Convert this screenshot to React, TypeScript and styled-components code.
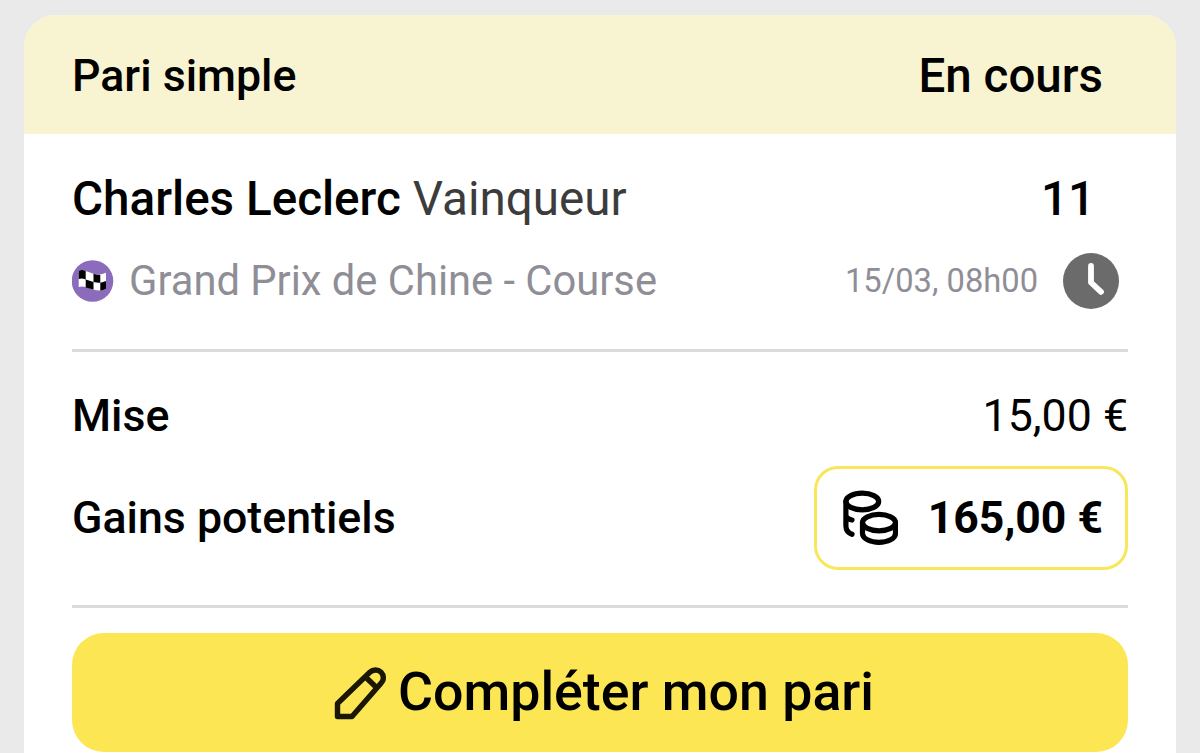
import React from "react";
import styled, { createGlobalStyle } from "styled-components";

const GlobalStyle = createGlobalStyle`
  body {
    margin: 0;
    background: #eaeaeb;
    font-family: Roboto, "Liberation Sans", sans-serif;
    color: #000;
  }
`;

const Page = styled.div`
  box-sizing: border-box;
  width: 1200px;
  height: 753px;
  padding: 15px 24px 0;
  overflow: hidden;
`;

const Card = styled.section`
  height: 780px;
  border-radius: 32px;
  background: #fff;
  overflow: hidden;
`;

const Header = styled.header`
  box-sizing: border-box;
  display: flex;
  align-items: center;
  justify-content: space-between;
  height: 119px;
  padding: 2px 73px 0 48px;
  background: #f8f3d0;
`;

const Body = styled.div`
  padding: 32px 48px 0;
`;

const Row = styled.div<{ height: number; end?: number }>`
  box-sizing: border-box;
  display: flex;
  align-items: center;
  justify-content: space-between;
  height: ${(props) => props.height}px;
  padding-right: ${(props) => props.end || 0}px;
`;

const Group = styled.div<{ gap: number }>`
  display: flex;
  align-items: center;
  gap: ${(props) => props.gap}px;
`;

const Text = styled.span<{
  size: number;
  weight?: number;
  color?: string;
}>`
  padding-top: 2px;
  font-size: ${(props) => props.size}px;
  font-weight: ${(props) => props.weight || 400};
  color: ${(props) => props.color || "#000"};
  line-height: 1.2;
  white-space: nowrap;
`;

const ButtonLabel = styled(Text)`
  padding-top: 0;
`;

const Divider = styled.hr`
  height: 3px;
  margin: 0;
  border: none;
  background: #dadbdc;
`;

const Summary = styled.div`
  padding: 29px 0 21px;
`;

const GainBox = styled.div`
  box-sizing: border-box;
  display: flex;
  align-items: center;
  justify-content: space-between;
  width: 314px;
  height: 104px;
  padding: 0 22px 0 25px;
  border: 3px solid #f8e75c;
  border-radius: 24px;
`;

const Button = styled.button`
  display: flex;
  align-items: center;
  justify-content: center;
  gap: 11px;
  width: 100%;
  height: 119px;
  margin-top: 25px;
  padding: 0 0 0 7px;
  border: none;
  border-radius: 32px;
  background: #fce653;
  font-family: inherit;
  cursor: pointer;
`;

const Icon = styled.svg`
  display: block;
  flex: none;
`;

function RaceIcon() {
  return (
    <Icon width="42" height="42" viewBox="0 0 42 42">
      <circle cx="20.5" cy="21" r="20.8" fill="#8b6bbb" />
      <path
        d="M6.7 10.8Q10 9.2 13.7 11L21.5 13.8Q28 15.5 34 12.8V28.8Q28 32 21.5 29.5L13.7 27Q10 25.8 6.7 27Z"
        fill="#fff"
      />
      <path
        d="M6.7 10.8Q10 9.2 13.7 11V19.5Q10 17.8 6.7 19ZM21.5 13.8Q25 15 28.3 14.7V22.8Q25 23 21.5 22ZM13.7 19.5L21.5 22V29.5L13.7 27.500ZM28.3 22.8Q31 22.3 34 21V28.8Q31 30.300 28.3 30.5Z"
        fill="#000"
      />
    </Icon>
  );
}

function ClockIcon() {
  return (
    <Icon width="56" height="56" viewBox="0 0 56 56">
      <circle cx="28" cy="28" r="28" fill="#6b6b6b" />
      <path
        d="M28 13V29.5L38 38.8"
        fill="none"
        stroke="#fff"
        strokeWidth="5.8"
        strokeLinecap="round"
        strokeLinejoin="round"
      />
    </Icon>
  );
}

function CoinsIcon() {
  return (
    <Icon
      width="56"
      height="56"
      viewBox="0 0 56 56"
      fill="none"
      stroke="#000"
      strokeWidth="5.2"
      strokeLinecap="round"
    >
      <ellipse cx="20.3" cy="11.5" rx="16.4" ry="8.3" />
      <path d="M3.9 11.5V36Q4 42 10 44.3M4 26Q5 29 10 30" />
      <ellipse cx="37" cy="32.6" rx="16.5" ry="8.2" />
      <path d="M20.5 32.6V43.5C20.5 48.5 28 52.3 37 52.3S53.500 48.5 53.5 43.5V32.6" />
    </Icon>
  );
}

function PencilIcon() {
  return (
    <Icon
      width="54"
      height="54"
      viewBox="0 0 54 54"
      fill="none"
      stroke="#1a1804"
      strokeWidth="5.4"
      strokeLinejoin="round"
    >
      <path d="M4.5 37.5L36.8 6.300C40 3.200 45 3.200 48 6.200S51.2 14 48 17.200L19 50.500H4.5Z" />
      <path d="M32.5 11L43.500 21.5" />
    </Icon>
  );
}

function App() {
  return (
    <>
      <GlobalStyle />
      <Page>
        <Card>
          <Header>
            <Text size={44.7} weight={500}>
              Pari simple
            </Text>
            <Text size={47.5} weight={500}>
              En cours
            </Text>
          </Header>
          <Body>
            <Row height={66} end={33}>
              <Group gap={12}>
                <Text size={47.6} weight={500}>
                  Charles Leclerc
                </Text>
                <Text size={47.6} color="#3c3c3c">
                  Vainqueur
                </Text>
              </Group>
              <Text size={47.6} weight={500}>
                11
              </Text>
            </Row>
            <Row height={97} end={9}>
              <Group gap={15}>
                <RaceIcon />
                <Text size={41.7} color="#8f8e97">
                  Grand Prix de Chine - Course
                </Text>
              </Group>
              <Group gap={25}>
                <Text size={32.7} color="#8f8e97">
                  15/03, 08h00
                </Text>
                <ClockIcon />
              </Group>
            </Row>
            <Row height={20} />
            <Divider />
            <Summary>
              <Row height={70}>
                <Text size={44.7} weight={500}>
                  Mise
                </Text>
                <Text size={44.7}>15,00 €</Text>
              </Row>
              <Row height={133}>
                <Text size={44.7} weight={500}>
                  Gains potentiels
                </Text>
                <GainBox>
                  <CoinsIcon />
                  <Text size={44.5} weight={700}>
                    165,00 €
                  </Text>
                </GainBox>
              </Row>
            </Summary>
            <Divider />
            <Button>
              <PencilIcon />
              <ButtonLabel size={53.7} weight={500}>
                Compléter mon pari
              </ButtonLabel>
            </Button>
          </Body>
        </Card>
      </Page>
    </>
  );
}

export default App;
